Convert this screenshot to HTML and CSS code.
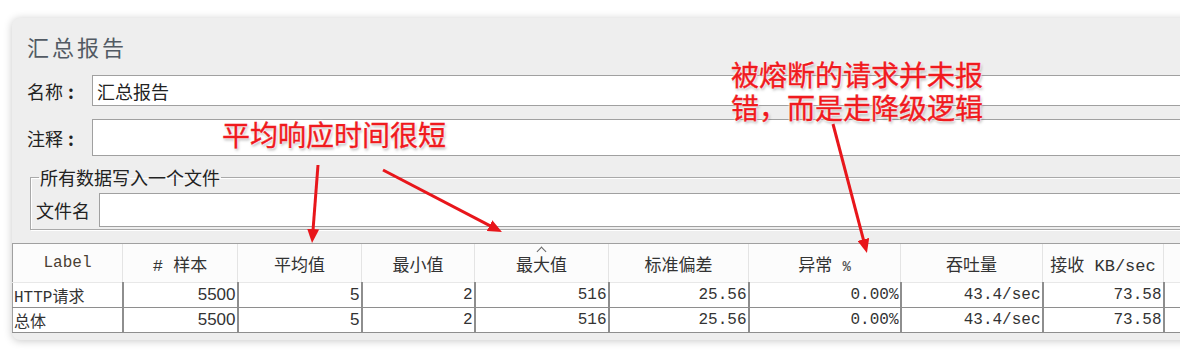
FILE: index.html
```html
<!DOCTYPE html>
<html lang="zh-CN">
<head>
    <meta charset="UTF-8">
    <title>汇总报告</title>
    <link rel="stylesheet" href="styles.css">
</head>
<body>
    <!-- JMeter 汇总报告面板 -->
    <div class="window">
        <div class="title">汇总报告</div>

        <div class="form-row name-row">
            <span class="form-label">名称<span class="colon">:</span></span>
            <div class="input">汇总报告</div>
        </div>
        <div class="form-row comment-row">
            <span class="form-label">注释<span class="colon">:</span></span>
            <div class="input"></div>
        </div>

        <fieldset class="file-group">
            <legend>所有数据写入一个文件</legend>
            <div class="form-row file-row">
                <span class="form-label file-label">文件名</span>
                <div class="input"></div>
            </div>
        </fieldset>

        <table class="report">
            <colgroup>
                <col style="width:110px">
                <col style="width:115px">
                <col style="width:124px">
                <col style="width:113px">
                <col style="width:134px">
                <col style="width:140px">
                <col style="width:152px">
                <col style="width:142px">
                <col style="width:121px">
                <col style="width:60px">
            </colgroup>
            <thead>
                <tr>
                    <th class="mono">Label</th>
                    <th># 样本</th>
                    <th>平均值</th>
                    <th>最小值</th>
                    <th class="sorted">最大值<span class="caret"></span></th>
                    <th>标准偏差</th>
                    <th>异常 <span class="pct">%</span></th>
                    <th>吞吐量</th>
                    <th>接收 KB/sec</th>
                    <th></th>
                </tr>
            </thead>
            <tbody>
                <tr>
                    <td class="name">HTTP请求</td>
                    <td class="sans">5500</td>
                    <td class="sans">5</td>
                    <td>2</td>
                    <td>516</td>
                    <td>25.56</td>
                    <td>0.00%</td>
                    <td>43.4/sec</td>
                    <td>73.58</td>
                    <td></td>
                </tr>
                <tr>
                    <td class="name">总体</td>
                    <td class="sans">5500</td>
                    <td class="sans">5</td>
                    <td>2</td>
                    <td>516</td>
                    <td>25.56</td>
                    <td>0.00%</td>
                    <td>43.4/sec</td>
                    <td>73.58</td>
                    <td></td>
                </tr>
            </tbody>
        </table>
    </div>

    <!-- 标注 -->
    <div class="note note-avg">平均响应时间很短</div>
    <div class="note note-err">被熔断的请求并未报<br>错，而是走降级逻辑</div>

    <svg class="arrows" width="1180" height="355">
        <defs>
            <marker id="head" markerUnits="userSpaceOnUse" markerWidth="14" markerHeight="12" viewBox="0 0 14 12" refX="4" refY="6" orient="auto">
                <path d="M0,0 L14,6 L0,12 Z" fill="#e8161b"/>
            </marker>
        </defs>
        <line x1="318" y1="165" x2="312.8" y2="233" class="arrow"/>
        <line x1="383" y1="170" x2="493.1" y2="227.4" class="arrow"/>
        <line x1="833" y1="124" x2="864.4" y2="243.3" class="arrow"/>
    </svg>
</body>
</html>
```

FILE: styles.css
```css
body {
    margin: 0;
    background: #fff;
    font-family: "Noto Sans CJK SC", sans-serif;
    color: #222;
    overflow: hidden;
    width: 1180px;
    height: 355px;
    position: relative;
}
.window {
    margin: 18px 0 0 12px;
    width: 1220px;
    height: 322px;
    background: #eeeeee;
    border-radius: 8px 0 0 8px;
    box-shadow: 0 1px 8px rgba(0, 0, 0, 0.22);
    overflow: hidden;
}
.title {
    padding: 15px 0 0 15px;
    font-size: 22px;
    line-height: 26px;
    letter-spacing: 3px;
    color: #525a63;
}
.form-row {
    display: flex;
    align-items: stretch;
}
.name-row {
    margin-top: 16px;
    height: 31px;
}
.comment-row {
    margin-top: 13px;
    height: 37px;
}
.form-label {
    width: 80px;
    padding-left: 15px;
    font-size: 18px;
    display: flex;
    align-items: center;
    box-sizing: border-box;
}
.colon {
    margin-left: 5px;
    font-weight: bold;
}
.input {
    flex: 1;
    background: #fff;
    border: 1px solid #a0a0a0;
    box-sizing: border-box;
    padding: 0 4px;
    font-size: 18px;
    display: flex;
    align-items: center;
}
.file-group {
    margin: 11px 0 0 18px;
    padding: 0 0 2px 5px;
    border: 1px solid #a9a9a9;
    box-shadow: 1px 1px 0 #fff, inset 1px 1px 0 #fff;
}
.file-group legend {
    margin-left: 3px;
    padding: 0 1px;
    font-size: 18px;
    line-height: 20px;
}
.file-row {
    margin-top: 6px;
    height: 34px;
}
.file-label {
    width: 63px;
    padding-left: 0;
}
.report {
    margin-top: 13px;
    border-collapse: collapse;
    table-layout: fixed;
    width: 1211px;
    background: #fff;
    font-family: "Liberation Mono", "Noto Sans CJK SC", monospace;
}
.report th {
    height: 38px;
    padding: 0;
    font-weight: normal;
    font-size: 17px;
    color: #333;
    background: #fcfcfc;
    border-top: 1px solid #a0a0a0;
    border-left: 1px solid #e4e4e4;
    border-bottom: 1px solid #e8e8e8;
    text-align: center;
    position: relative;
}
.report th:first-child {
    border-left: 1px solid #a0a0a0;
}
.report th.mono {
    font-size: 16px;
    color: #4a3f33;
}
.pct {
    font-size: 14px;
    font-weight: bold;
    color: #555;
}
.caret {
    position: absolute;
    left: 63px;
    top: 4px;
    width: 6px;
    height: 6px;
    border-left: 1px solid #666;
    border-top: 1px solid #666;
    transform: rotate(45deg);
}
.report td {
    height: 23px;
    padding: 0 1px 0 0;
    font-size: 16px;
    color: #333;
    text-align: right;
    border: 1px solid #8e8e8e;
    border-right-width: 2px;
    white-space: nowrap;
}
.report td.name {
    text-align: left;
    padding-left: 1px;
    border-left: 1px solid #a0a0a0;
}
.report td.sans {
    font-family: "Liberation Sans", sans-serif;
    font-size: 17px;
}
.note {
    position: absolute;
    font-size: 28px;
    line-height: 33px;
    color: #f01a1e;
    white-space: nowrap;
    -webkit-text-stroke: 0.4px #f01a1e;
    text-shadow: 0 0 2px #fff, 0 0 2px #fff, 0 0 3px #fff, 1px 2px 3px rgba(0, 0, 0, 0.35);
}
.note-avg {
    left: 222px;
    top: 118px;
}
.note-err {
    left: 731px;
    top: 58px;
}
.arrows {
    position: absolute;
    left: 0;
    top: 0;
    pointer-events: none;
}
.arrow {
    stroke: #e8161b;
    stroke-width: 3;
    marker-end: url(#head);
}
```
